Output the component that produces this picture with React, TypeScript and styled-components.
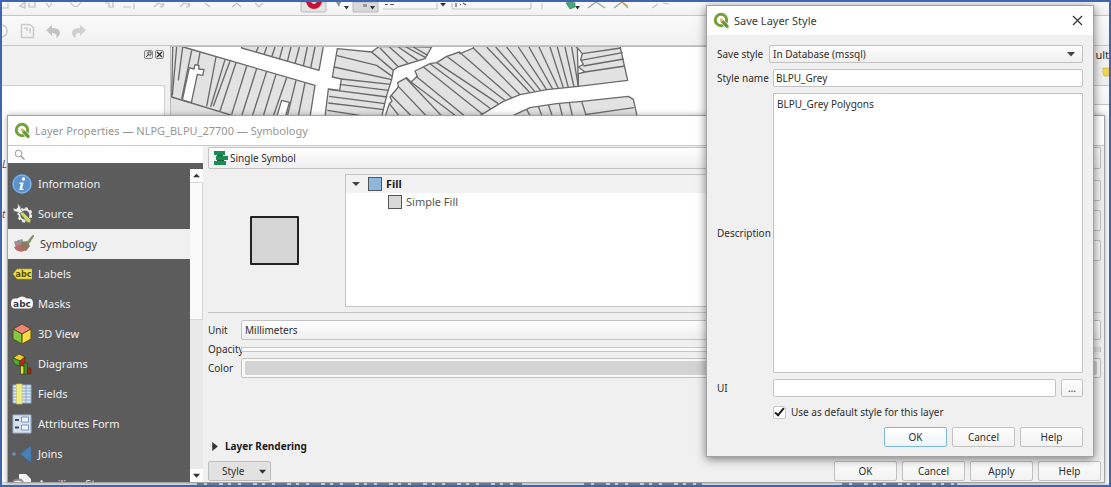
import React from "react";
import styled, { createGlobalStyle, css } from "styled-components";

const uiFont = `"Noto Sans", "Open Sans", sans-serif`;
const smallFont = `"Noto Sans", "DejaVu Sans", sans-serif`;

const GlobalStyle = createGlobalStyle`
  *, *::before, *::after { box-sizing: border-box; }
  body { margin: 0; background: #f0f0f0; font: 10px/14px ${smallFont}; color: #2e2e2e; }
  button, input, select, textarea { font: inherit; color: inherit; margin: 0; }
  ul { list-style: none; margin: 0; padding: 0; }
  h1, h2, p { margin: 0; font: inherit; }
  svg { display: block; flex: none; }
`;

/* ---------- main window ---------- */

const Desktop = styled.div`
  position: relative;
  display: flex;
  flex-direction: column;
  height: 100vh;
  min-height: 480px;
  border: 2px solid #4064b0;
  overflow: hidden;
  background: #f0f0f0;
`;

const Toolbar = styled.div<{ $h: number }>`
  display: flex;
  align-items: center;
  flex: none;
  height: ${(p) => p.$h}px;
  overflow: hidden;
  border-bottom: 1px solid #c6c6c6;
  background: linear-gradient(#fafafa, #f1f1f1);
`;

const Workspace = styled.div`
  display: flex;
  flex: 1;
  min-height: 0;
  gap: 5px;
`;

const Dock = styled.aside`
  display: flex;
  flex-direction: column;
  flex: none;
  width: 163px;
`;

const DockTitle = styled.div`
  display: flex;
  justify-content: flex-end;
  align-items: flex-start;
  gap: 2px;
  height: 39px;
  padding: 4px 1px;
`;

const DockButton = styled.button`
  display: grid;
  place-items: center;
  width: 9px;
  height: 9px;
  padding: 0;
  border: 1px solid #888;
  border-radius: 2px;
  background: #e4e4e4;
`;

const DockTree = styled.ul`
  flex: 1;
  padding-top: 71px;
  border: 1px solid #cfcfcf;
  border-left: 0;
  background: #fff;
  font-style: italic;
  overflow: hidden;
`;

const DockItem = styled.li`
  height: 50px;
  color: #555;
`;

const MapView = styled.main`
  flex: 1;
  min-width: 0;
  overflow: hidden;
  border-left: 1px solid #bbb;
  border-top: 1px solid #bbb;
  background: #fff;
`;

const ResultsDock = styled.aside`
  flex: none;
  width: 24px;
  overflow: hidden;
  background: linear-gradient(#f0f0f0 39px, #c6c6c6 39px, #c6c6c6 40px, #fafafa 40px, #f4f4f4 58px, #c6c6c6 58px, #c6c6c6 59px, #fbfdff 59px);
`;

const ResultsTitle = styled.h2`
  padding-top: 1px;
  text-align: right;
  font: 11px/16px ${uiFont};
`;

const ResultsTools = styled.div`
  display: flex;
  justify-content: flex-end;
`;

const BottomStrip = styled.div`
  flex: none;
  height: 2px;
  overflow: hidden;
  background: #dfe6f2;
`;

/* ---------- shared window parts ---------- */

const windowFrame = css`
  position: absolute;
  display: flex;
  flex-direction: column;
  border: 1px solid #a2a2a2;
  background: #f0f0f0;
`;

const TitleBar = styled.header<{ $muted?: boolean }>`
  display: flex;
  align-items: center;
  gap: 4px;
  flex: none;
  height: 29px;
  padding: 0 10px 0 6px;
  background: #fff;
  font: 11px/16px ${uiFont};
  color: ${(p) => (p.$muted ? "#969696" : "#3a3a3a")};
`;

const Title = styled.h1`
  flex: 1;
  white-space: nowrap;
`;

const CloseButton = styled.button`
  display: grid;
  place-items: center;
  width: 12px;
  height: 12px;
  padding: 0;
  border: 0;
  background: none;
`;

const PushButton = styled.button<{ $primary?: boolean }>`
  width: 63px;
  height: 20px;
  padding: 0;
  border: 1px solid ${(p) => (p.$primary ? "#7fb6d9" : "#c2c2c2")};
  border-radius: 2px;
  background: ${(p) =>
    p.$primary ? "linear-gradient(#ffffff, #edf4f8)" : "linear-gradient(#fefefe, #f2f2f2)"};
  line-height: 16px;
`;

const ButtonRow = styled.div`
  display: flex;
  justify-content: flex-end;
  gap: 5px;
`;

const SelectWrap = styled.div<{ $h: number }>`
  position: relative;
  flex: 1;
  min-width: 0;
  height: ${(p) => p.$h}px;
`;

const Select = styled.select<{ $pad?: number }>`
  display: block;
  appearance: none;
  width: 100%;
  height: 100%;
  padding: 0 18px 0 ${(p) => p.$pad ?? 3}px;
  border: 1px solid #c2c2c2;
  border-radius: 2px;
  background: linear-gradient(#fefefe, #efefef);
`;

const SelectArrow = styled.svg`
  position: absolute;
  right: 8px;
  top: 50%;
  margin-top: -2px;
  pointer-events: none;
`;

const SelectIcon = styled.span`
  position: absolute;
  left: 6px;
  top: 4px;
  pointer-events: none;
`;

/* ---------- layer properties ---------- */

const PropertiesWindow = styled.section`
  ${windowFrame}
  left: 5px;
  right: 4px;
  top: 113px;
  bottom: 2px;
  box-shadow: 0 0 6px rgba(0, 0, 0, 0.3);
`;

const PropertiesBody = styled.div`
  display: flex;
  flex: 1;
  min-height: 0;
  border-top: 1px solid #c9c9c9;
`;

const Sidebar = styled.nav`
  display: flex;
  flex-direction: column;
  flex: none;
  width: 195px;
  background: #5c5c5c;
`;

const SearchBox = styled.label`
  display: flex;
  align-items: center;
  height: 17px;
  margin-bottom: 6px;
  padding-left: 6px;
  background: #fff;
`;

const SearchInput = styled.input`
  flex: 1;
  min-width: 0;
  height: 16px;
  border: 0;
  background: none;
  outline: none;
`;

const SidebarScroll = styled.div`
  display: flex;
  flex: 1;
  min-height: 0;
`;

const PageList = styled.ul`
  flex: 1;
  overflow: hidden;
`;

const PageItem = styled.li<{ $active?: boolean }>`
  display: flex;
  align-items: center;
  gap: 6px;
  height: 30px;
  padding-left: 4px;
  background: ${(p) => (p.$active ? "#f0f0f0" : "transparent")};
  color: ${(p) => (p.$active ? "#3c3c3c" : "#f0f0f0")};
  font: 11px/16px ${uiFont};
  white-space: nowrap;
`;

const ScrollTrack = styled.div`
  display: flex;
  flex-direction: column;
  flex: none;
  width: 13px;
  background: #e9e9e9;
`;

const ScrollArrow = styled.button`
  display: grid;
  place-items: center;
  height: 13px;
  padding: 0;
  border: 0;
  background: #fdfdfd;
`;

const ScrollThumb = styled.div`
  flex: 137;
  background: #fafafa;
  border: 1px solid #d6d6d6;
  border-left: 0;
`;

const ScrollRest = styled.div`
  flex: 151;
`;

const Content = styled.div`
  display: flex;
  flex-direction: column;
  flex: 1;
  min-width: 0;
  padding: 1px 3px 1px 5px;
`;

const RendererRow = styled.div`
  display: flex;
  margin-bottom: 5px;
`;

const SymbolArea = styled.div`
  display: flex;
  gap: 4px;
  height: 133px;
`;

const SymbolPreview = styled.div`
  display: grid;
  place-items: center;
  flex: none;
  width: 133px;
`;

const PreviewSwatch = styled.div`
  width: 49px;
  height: 49px;
  border: 2px solid #222;
  border-radius: 1px;
  background: #d5d5d5;
`;

const SymbolTree = styled.ul`
  flex: 1;
  border: 1px solid #c6c6c6;
  background: #fff;
  font: 11px/16px ${uiFont};
`;

const SymbolNode = styled.li<{ $root?: boolean }>`
  display: flex;
  align-items: center;
  gap: 4px;
  height: 18px;
  padding-left: ${(p) => (p.$root ? 6 : 42)}px;
  background: ${(p) => (p.$root ? "#f2f2f2" : "transparent")};
  color: ${(p) => (p.$root ? "#1c1c1c" : "#555")};
  font-weight: ${(p) => (p.$root ? 700 : 400)};
`;

const NodeSwatch = styled.span<{ $c: string }>`
  width: 14px;
  height: 14px;
  border: 1px solid #555;
  background: ${(p) => p.$c};
`;

const NodeArrow = styled.svg`
  margin-right: 4px;
`;

const LayerTools = styled.div`
  display: flex;
  flex-direction: column;
  gap: 9px;
  padding-top: 6px;
`;

const ToolButton = styled.button`
  width: 22px;
  height: 21px;
  padding: 0;
  border: 1px solid #c2c2c2;
  border-radius: 2px;
  background: #f6f6f6;
`;

const Divider = styled.hr`
  width: 100%;
  height: 1px;
  margin: 5px 0 7px;
  border: 0;
  background: #c6c6c6;
`;

const Field = styled.div`
  display: flex;
  align-items: center;
`;

const FieldLabel = styled.label`
  flex: none;
  width: 33px;
  white-space: nowrap;
`;

const OpacitySlider = styled.input`
  flex: 1;
  min-width: 0;
  appearance: none;
  height: 5px;
  margin: 0;
  border: 1px solid #c6c6c6;
  background: #fafafa;

  &::-webkit-slider-thumb {
    appearance: none;
    width: 9px;
    height: 5px;
    background: #ddd;
  }
`;

const ColorButton = styled.button`
  flex: 1;
  height: 20px;
  padding: 2px 3px;
  border: 1px solid #c2c2c2;
  border-radius: 2px;
  background: #f8f8f8;
`;

const ColorFill = styled.span`
  display: block;
  height: 14px;
  border-radius: 2px;
  background: #d3d3d3;
`;

const SymbolFields = styled.div`
  display: flex;
  flex-direction: column;
  gap: 2px;
`;

const GroupToggle = styled.button`
  display: flex;
  align-items: center;
  align-self: flex-start;
  gap: 6px;
  margin: auto 0 8px;
  padding: 0 0 0 2px;
  border: 0;
  background: none;
  font-weight: 700;
  line-height: 14px;
  color: #1c1c1c;
`;

const Footer = styled.footer`
  display: flex;
  justify-content: space-between;
`;

const StyleButton = styled(PushButton)`
  display: flex;
  align-items: center;
  justify-content: space-between;
  padding: 0 4px 0 13px;
  background: #e2e2e2;
  border-color: #bdbdbd;
`;

/* ---------- save layer style ---------- */

const SaveWindow = styled.section`
  ${windowFrame}
  right: 15px;
  top: 3px;
  width: 388px;
  box-shadow: 0 2px 9px rgba(0, 0, 0, 0.5);
`;

const SaveForm = styled.form`
  display: flex;
  flex-direction: column;
  gap: 6px;
  padding: 10px 10px 9px;
`;

const SaveRow = styled.div`
  display: flex;
  align-items: center;
  gap: 5px;
`;

const SaveLabel = styled.label<{ $w?: number }>`
  flex: none;
  width: ${(p) => p.$w ?? 51}px;
  white-space: nowrap;
`;

const TextInput = styled.input`
  flex: 1;
  min-width: 0;
  height: 18px;
  padding: 0 2px;
  border: 1px solid #c2c2c2;
  border-radius: 2px;
  background: #fff;
`;

const TextArea = styled.textarea`
  display: block;
  flex: 1;
  min-width: 0;
  height: 280px;
  padding: 3px;
  border: 1px solid #c2c2c2;
  border-radius: 1px;
  background: #fff;
  resize: none;
`;

const BrowseButton = styled(PushButton)`
  width: 22px;
  height: 18px;
  line-height: 14px;
`;

const DefaultRow = styled.label`
  display: flex;
  align-items: center;
  gap: 5px;
  height: 16px;
  margin: 1px 0 1px 56px;
`;

const CheckBox = styled.input`
  appearance: none;
  display: grid;
  place-items: center;
  width: 13px;
  height: 13px;
  border: 1px solid #c8c8c8;
  border-radius: 2px;
  background: #fff;

  &:checked::before {
    content: "";
    width: 5px;
    height: 10px;
    margin-top: -3px;
    border: solid #1c1c1c;
    border-width: 0 2px 2px 0;
    rotate: 40deg;
  }
`;

/* ---------- drawings ---------- */

const QgisLogo = () => (
  <svg width="17" height="17" viewBox="0 0 17 17" aria-hidden="true">
    <circle cx="8" cy="8" r="5.7" fill="none" stroke="#72a03a" strokeWidth="3" />
    <path d="M8 8.2l2.6-.3 5.3 5.6v2.7h-2.8L8 10.6z" fill="#639436" stroke="#fff" strokeWidth=".7" />
    <path d="M7 6.5l3 .2-.3 2.8-2.6.1z" fill="#efb45c" />
  </svg>
);

const Triangle = ({ dir, size = 7 }: { dir: "up" | "down" | "right"; size?: number }) => (
  <svg width={size} height={size} viewBox="0 0 8 8" aria-hidden="true">
    <path
      d={dir === "up" ? "M0 6l4-4 4 4z" : dir === "down" ? "M0 2h8L4 6.5z" : "M2 0v8l5-4z"}
      fill="#333"
    />
  </svg>
);

const Parcels = () => (
  <svg width="536" height="69" viewBox="513 140 1608 207" aria-hidden="true">
    <g fill="#e2e2e2" stroke="#6a6a6a" strokeWidth="4" strokeLinejoin="round">
      <path d="M513 290L700 347H513z" stroke="none" />
      <path d="M518 138H545L560 143 945 255 930 350H712L515 290z" />
      <path d="M725 138L725 143 957 210 970 138z" />
      <path
        fill="none"
        d="M530 140L517 285M548 140L535 240M575 150L545 296M600 156L592 200M648 170L620 318M675 178L632 320M708 187L660 332M640 318L690 182M740 197L695 342M770 205L725 347M800 213L757 347M828 222L790 347M860 232L820 347M888 240L862 347M915 247L895 347M775 140L768 156M800 140L792 163M825 140L815 170M848 140L838 177M873 140L862 184M898 140L885 190M922 140L910 197M945 140L932 203"
      />
      <path fill="#fff" d="M568 202L582 206 585 193 597 196 596 206 612 208 608 225 592 222 574 307 547 299z" />
      <path fill="#fff" d="M845 300L868 306 856 350H830z" />
    </g>
    <g
      transform="translate(990 0)"
      fill="#e2e2e2"
      stroke="#6a6a6a"
      strokeWidth="4"
      strokeLinejoin="round"
    >
      <path d="M22 145L125 155 190 210 185 238 170 285 155 350H-15L-5 266 29 270 34 236 7 230z" />
      <path d="M148 138L125 155 190 210 203 200 285 175 305 140z" />
      <path d="M165 350L178 310 186 302 180 290 205 260 203 247 230 232 243 245 262 228 255 212 300 190 320 187 350 168 388 155 390 160 430 143V138H742L745 258 650 268 570 283 520 303 455 343 440 350z" />
      <path d="M738 138L757 160 752 178 760 192 745 200 765 215 745 220V258L893 240 870 138z" />
      <path d="M540 350L600 322 680 310 755 303 895 288 910 297 922 350z" />
      <path
        fill="none"
        d="M18 165L140 195 187 228M12 200L185 238M34 236L182 252M29 252L175 270M0 268L172 290M-3 288L165 310M-5 308L162 328M-8 330L120 350M150 143L203 198M178 140L235 190M205 140L265 181M228 140L287 172M250 140L293 165M178 310L210 350M183 285L247 350M205 258L292 350M228 234L338 350M243 245L382 350M258 228L408 350M280 200L458 342M300 190L482 325M320 187L505 310M350 168L525 300M388 155L545 292M430 143L570 283M470 140L600 277M497 140L615 274M530 140L632 271M565 140L650 268M597 140L668 266M627 140L685 264M660 140L700 262M682 140L715 261M705 140L732 260M725 140L745 258M757 160L873 143M752 180L878 157M760 197L881 176M765 215L885 197M590 328L603 350M625 318L637 350M655 313L668 350M688 309L698 350M718 306L728 350M755 303L770 350M765 343L912 322"
      />
    </g>
  </svg>
);

const TopIcons = () => (
  <svg width="1100" height="14" viewBox="2 2 1100 14" aria-hidden="true">
    <g fill="none" stroke="#c0c0c0" strokeWidth="1.2">
      <path d="M2 8h6V3M20 6l5-4v6zM29 3v4h6V2M46 3l3 4 3-4M70 2q6 9 11 0M105 3h4v4h5M113 2v5M123 7h8M134 3v6M154 7l4-4 5 2M162 3a2 2 0 1 1-2 3M180 7l4-4 5 2M188 3a2 2 0 1 1-2 3M205 3l5 4M232 7l5-4 4 4M255 3l4 4 4-4" />
      <path d="M437 3V9M452 3v4q0 2 2 2h75q2 0 2-2V2M542 3v6M383 9h54" stroke="#c8c8c8" />
      <path d="M588 8l8-6 9 6M614 8l8-6 6 6" stroke="#93a793" />
      <path d="M622 2l6 4" stroke="#dba045" />
      <path d="M652 8l6-4M663 3l6 1" />
    </g>
    <path d="M301 2h25v9q0 1-2 1h-21q-2 0-2-1z" fill="#e4e4e4" stroke="#bbb" />
    <path d="M306 2q2 7 8 7t8-7h-5q-3 4-6 0z" fill="#c41230" />
    <path d="M353 2h25v10h-25z" fill="#d9d9d9" stroke="#bbb" />
    <path d="M344 6h5l-2.500 3.500zM370 6h5l-2.500 3.500zM440 3h6l-3 3.500zM575 6h5l-2.500 3.500z" fill="#333" />
    <path d="M336 2l3 5 2-5z" fill="#899" />
    <path d="M363 4h4v3h-4z" fill="#999" />
    <path d="M385 4.500h3M390 4.500h4M456 3v4M460 4.500h1M463 3l3 2" stroke="#555" strokeWidth="1.200" />
    <path d="M566 3l4-1 5 1v4l-5 2z" fill="#45a878" stroke="#2c7a55" strokeWidth=".6" />
  </svg>
);

const UndoIcons = () => (
  <svg width="90" height="20" viewBox="2 21 90 20" aria-hidden="true">
    <g fill="none" stroke="#cacaca" strokeWidth="1.500">
      <path d="M2 25q5 1 5 6t-5 6" />
      <path d="M21.500 24.500h8l4 3v10h-12zM24 28h3v3M30 28v5" />
    </g>
    <path d="M46 30l6-5v3q8 0 8 5 0 3-4 5 2-5-4-5v3z" fill="#c4c4c4" />
    <path d="M86 30l-6-5v3q-8 0-8 5 0 3 4 5-2-5 4-5v3z" fill="#d0d0d0" />
  </svg>
);

const Icon = ({ children }: { children: React.ReactNode }) => (
  <svg width="20" height="22" viewBox="0 0 20 22" aria-hidden="true">
    {children}
  </svg>
);

const tagFont = { fontFamily: "DejaVu Sans", fontWeight: 700, textAnchor: "middle" as const };

const pages: { label: string; active?: boolean; icon: React.ReactNode }[] = [
  {
    label: "Information",
    icon: (
      <Icon>
        <circle cx="10" cy="11" r="10" fill="#5b93cf" />
        <circle cx="10" cy="11" r="8.800" fill="none" stroke="#8db6e0" />
        <circle cx="11.500" cy="6" r="1.700" fill="#fff" />
        <path d="M7.500 9.500h4.200l-1.700 6.200h1.700l-.3 1.300H7.200l1.700-6.200H7.200z" fill="#fff" />
      </Icon>
    ),
  },
  {
    label: "Source",
    icon: (
      <Icon>
        <circle cx="13" cy="12" r="5.500" fill="none" stroke="#ececec" strokeWidth="2" />
        <circle cx="13" cy="12" r="6.800" fill="none" stroke="#ececec" strokeWidth="1.800" strokeDasharray="2.800 2.540" />
        <path d="M5 1l1 3-2 2-3-1q0 4 4 4h1l9 9 2-2-8-9Q9 2 5 1z" fill="#f6f6f6" stroke="#5c5c5c" strokeWidth=".6" />
        <path d="M8 10l3-1 8 8-1 3-3-1z" fill="#d2da76" stroke="#75793a" strokeWidth=".7" />
      </Icon>
    ),
  },
  {
    label: "Symbology",
    active: true,
    icon: (
      <svg width="22" height="22" viewBox="0 0 22 22" aria-hidden="true">
        <path d="M2 9l8-3 5 9-9 3z" fill="#7ba58d" />
        <path d="M2 9l5-2 2 5-4 3z" fill="#a886a2" />
        <path d="M6 18q-3-1-4-4l7-3 6 5q-4 4-9 2z" fill="#b46c68" />
        <path d="M9 9l6-1 3 5-4 5q-6-2-5-9z" fill="#8f7768" />
        <path d="M14 10l7-8 1 1-6 9z" fill="#83996b" stroke="#6b7d55" strokeWidth=".5" />
      </svg>
    ),
  },
  {
    label: "Labels",
    icon: (
      <Icon>
        <path d="M1 11l4-5h15v10H5z" fill="#f0df45" stroke="#b6a520" strokeWidth=".6" />
        <text x="11.500" y="14" fontSize="8" fill="#574f16" {...tagFont}>abc</text>
      </Icon>
    ),
  },
  {
    label: "Masks",
    icon: (
      <svg width="20" height="22" viewBox="1 0 20 22" aria-hidden="true" overflow="visible">
        <path d="M4 5.500h14q4 0 4 5t-4 5H4q-4 0-4-5t4-5z" fill="#fff" />
        <circle cx="11" cy="9" r="5.500" fill="#fff" />
        <text x="11" y="14" fontSize="9" fill="#3c3c46" {...tagFont}>abc</text>
      </svg>
    ),
  },
  {
    label: "3D View",
    icon: (
      <Icon>
        <g stroke="#5e4a20" strokeLinejoin="round">
          <path d="M10 1l9 5-9 5-9-5z" fill="#f08478" />
          <path d="M1 6l9 5v10l-9-5z" fill="#7fcb3c" />
          <path d="M19 6l-9 5v10l9-5z" fill="#f6dc42" />
        </g>
      </Icon>
    ),
  },
  {
    label: "Diagrams",
    icon: (
      <Icon>
        <g stroke="#33430e" strokeWidth=".7" strokeLinejoin="round">
          <path d="M1 5l6-4 6 3-5 4z" fill="#f4c92f" />
          <path d="M1 5l7 3v5q-6-1-7-5z" fill="#4ca832" />
          <path d="M8 8l5-4v6l-5 4z" fill="#c9241c" />
          <path d="M8.500 13h3.500v8H8.500z" fill="#f4dc3d" />
          <path d="M12 10h3.500v11H12z" fill="#3d8d2e" />
          <path d="M15.500 15H19v6h-3.500z" fill="#aa231c" />
        </g>
      </Icon>
    ),
  },
  {
    label: "Fields",
    icon: (
      <Icon>
        <path d="M1 2h18v18H1z" fill="#dce8f3" stroke="#94aecb" />
        <path d="M1 5h18M1 8h18M1 11h18M1 14h18M1 17h18M14 2v18" stroke="#8ba9c9" />
        <path d="M4.500 1h5.500v20H4.500z" fill="#f2ee80" stroke="#cfc960" strokeWidth=".7" />
      </Icon>
    ),
  },
  {
    label: "Attributes Form",
    icon: (
      <Icon>
        <path d="M1 2h18v18H1z" fill="#d6e1ee" stroke="#9fb3cd" />
        <path d="M9.500 4h7v5h-7zM9.500 12h7v5h-7z" fill="#eef3f9" stroke="#7f97b8" />
        <path d="M3 7h4M3 14.500h4" stroke="#3d4d63" strokeWidth="2" />
      </Icon>
    ),
  },
  {
    label: "Joins",
    icon: (
      <Icon>
        <path d="M8 11L19 2.500v17z" fill="#4a7fb6" stroke="#37689c" strokeWidth=".6" />
        <circle cx="2" cy="11" r="1.800" fill="#6494c4" />
      </Icon>
    ),
  },
  {
    label: "Auxiliary Storage",
    icon: (
      <Icon>
        <path d="M7 1h7l5 5v15H7z" fill="#f4f4f4" />
        <path d="M1 9q0-3 5-3t5 3v11H1z" fill="#c4c4c4" stroke="#777" />
        <ellipse cx="6" cy="9" rx="4.500" ry="2" fill="#ececec" stroke="#777" />
      </Icon>
    ),
  },
];

const SingleSymbolIcon = () => (
  <svg width="14" height="14" viewBox="0 0 14 14" aria-hidden="true">
    <path d="M0 0h11v4H0zM2 5h12v4H2zM0 10h12v4H0z" fill="#1c8a52" />
    <path d="M3 4h6v1H3zM3 9h7v1H3z" fill="#126238" />
  </svg>
);

/* ---------- windows ---------- */

const LayerProperties = () => (
  <PropertiesWindow aria-label="Layer Properties">
    <TitleBar $muted>
      <QgisLogo />
      <Title>Layer Properties — NLPG_BLPU_27700 — Symbology</Title>
    </TitleBar>
    <PropertiesBody>
      <Sidebar>
        <SearchBox>
          <svg width="11" height="11" viewBox="0 0 11 11" aria-hidden="true">
            <circle cx="4.500" cy="4.500" r="3.300" fill="none" stroke="#999" />
            <path d="M7 7l3.500 3.500" stroke="#999" strokeWidth="1.400" />
          </svg>
          <SearchInput type="text" aria-label="Search" />
        </SearchBox>
        <SidebarScroll>
          <PageList>
            {pages.map((page) => (
              <PageItem key={page.label} $active={page.active}>
                {page.icon}
                {page.label}
              </PageItem>
            ))}
          </PageList>
          <ScrollTrack>
            <ScrollArrow aria-label="Scroll up"><Triangle dir="up" /></ScrollArrow>
            <ScrollThumb />
            <ScrollRest />
            <ScrollArrow aria-label="Scroll down"><Triangle dir="down" /></ScrollArrow>
          </ScrollTrack>
        </SidebarScroll>
      </Sidebar>
      <Content>
        <RendererRow>
          <SelectWrap $h={22}>
            <SelectIcon><SingleSymbolIcon /></SelectIcon>
            <Select $pad={21} aria-label="Renderer" defaultValue="single">
              <option value="single">Single Symbol</option>
            </Select>
          </SelectWrap>
        </RendererRow>
        <SymbolArea>
          <SymbolPreview><PreviewSwatch /></SymbolPreview>
          <SymbolTree>
            <SymbolNode $root>
              <NodeArrow width="8" height="8" viewBox="0 0 8 8" aria-hidden="true">
                <path d="M0 2h8L4 6z" fill="#444" />
              </NodeArrow>
              <NodeSwatch $c="#8db8dc" />
              Fill
            </SymbolNode>
            <SymbolNode>
              <NodeSwatch $c="#d8d8d8" />
              Simple Fill
            </SymbolNode>
          </SymbolTree>
          <LayerTools>
            <ToolButton aria-label="Add symbol layer" />
            <ToolButton aria-label="Remove symbol layer" />
            <ToolButton aria-label="Lock color" />
          </LayerTools>
        </SymbolArea>
        <Divider />
        <SymbolFields>
          <Field>
            <FieldLabel htmlFor="unit">Unit</FieldLabel>
            <SelectWrap $h={20}>
              <Select id="unit" defaultValue="mm">
                <option value="mm">Millimeters</option>
              </Select>
            </SelectWrap>
          </Field>
          <Field>
            <FieldLabel htmlFor="opacity">Opacity</FieldLabel>
            <OpacitySlider id="opacity" type="range" defaultValue={100} />
          </Field>
          <Field>
            <FieldLabel htmlFor="color">Color</FieldLabel>
            <ColorButton id="color" type="button"><ColorFill /></ColorButton>
          </Field>
        </SymbolFields>
        <GroupToggle type="button">
          <Triangle dir="right" size={9} />
          Layer Rendering
        </GroupToggle>
        <Footer>
          <StyleButton type="button">
            Style
            <Triangle dir="down" />
          </StyleButton>
          <ButtonRow>
            <PushButton type="button">OK</PushButton>
            <PushButton type="button">Cancel</PushButton>
            <PushButton type="button">Apply</PushButton>
            <PushButton type="button">Help</PushButton>
          </ButtonRow>
        </Footer>
      </Content>
    </PropertiesBody>
  </PropertiesWindow>
);

const SaveLayerStyle = () => (
  <SaveWindow aria-label="Save Layer Style">
    <TitleBar>
      <QgisLogo />
      <Title>Save Layer Style</Title>
      <CloseButton aria-label="Close">
        <svg width="11" height="11" viewBox="0 0 11 11" aria-hidden="true">
          <path d="M1 1l9 9M10 1l-9 9" stroke="#333" strokeWidth="1.200" />
        </svg>
      </CloseButton>
    </TitleBar>
    <SaveForm onSubmit={(e) => e.preventDefault()}>
      <SaveRow>
        <SaveLabel $w={47} htmlFor="save-style">Save style</SaveLabel>
        <SelectWrap $h={18}>
          <Select id="save-style" defaultValue="db">
            <option value="db">In Database (mssql)</option>
          </Select>
          <SelectArrow width="8" height="5" viewBox="0 0 8 5" aria-hidden="true">
            <path d="M0 0h8L4 4.500z" fill="#444" />
          </SelectArrow>
        </SelectWrap>
      </SaveRow>
      <SaveRow>
        <SaveLabel htmlFor="style-name">Style name</SaveLabel>
        <TextInput id="style-name" defaultValue="BLPU_Grey" />
      </SaveRow>
      <SaveRow>
        <SaveLabel htmlFor="description">Description</SaveLabel>
        <TextArea id="description" defaultValue="BLPU_Grey Polygons" />
      </SaveRow>
      <SaveRow>
        <SaveLabel htmlFor="ui">UI</SaveLabel>
        <TextInput id="ui" />
        <BrowseButton type="button" aria-label="Browse">…</BrowseButton>
      </SaveRow>
      <DefaultRow>
        <CheckBox type="checkbox" defaultChecked />
        Use as default style for this layer
      </DefaultRow>
      <ButtonRow>
        <PushButton $primary>OK</PushButton>
        <PushButton type="button">Cancel</PushButton>
        <PushButton type="button">Help</PushButton>
      </ButtonRow>
    </SaveForm>
  </SaveWindow>
);

export default function App() {
  return (
    <>
      <GlobalStyle />
      <Desktop>
        <Toolbar $h={14}><TopIcons /></Toolbar>
        <Toolbar $h={30}><UndoIcons /></Toolbar>
        <Workspace>
          <Dock>
            <DockTitle>
              <DockButton aria-label="Float panel">
                <svg width="7" height="7" viewBox="0 0 7 7"><path d="M1 6l3-3M3 1h3v3H3z" fill="none" stroke="#555" /></svg>
              </DockButton>
              <DockButton aria-label="Close panel">
                <svg width="7" height="7" viewBox="0 0 7 7"><path d="M1 1l5 5M6 1L1 6" stroke="#333" strokeWidth="1.300" /></svg>
              </DockButton>
            </DockTitle>
            <DockTree>
              <DockItem>L</DockItem>
              <DockItem>t</DockItem>
            </DockTree>
          </Dock>
          <MapView><Parcels /></MapView>
          <ResultsDock>
            <ResultsTitle>ult</ResultsTitle>
            <ResultsTools>
              <svg width="9" height="16" viewBox="0 0 9 16" aria-hidden="true">
                <path d="M3 5h6v8H4q-2-4-1-8z" fill="#ecd750" stroke="#c9b030" strokeWidth=".6" />
              </svg>
            </ResultsTools>
          </ResultsDock>
        </Workspace>
        <BottomStrip>
          <svg width="1100" height="2" viewBox="0 0 1100 2" aria-hidden="true">
            <path d="M195 1H520M582 1H700M840 1H955" stroke="#7886a6" strokeWidth="2" strokeDasharray="7 3 12 4 5 3" />
          </svg>
        </BottomStrip>
      </Desktop>
      <WindowLayer>
        <LayerProperties />
        <SaveLayerStyle />
      </WindowLayer>
    </>
  );
}

const WindowLayer = styled.div`
  position: absolute;
  inset: 2px;
  overflow: hidden;
`;
